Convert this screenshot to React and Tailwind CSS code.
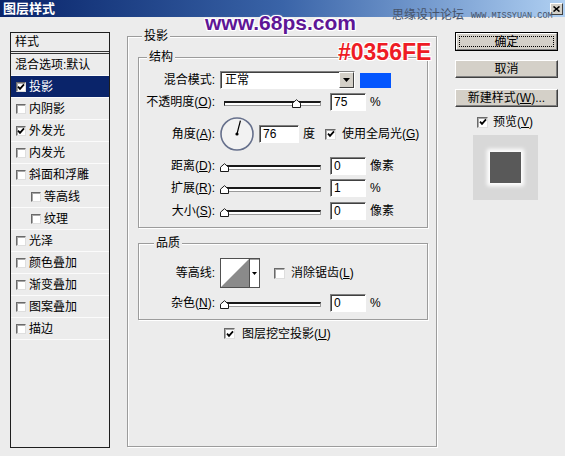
import React from "react";

const Check = ({ checked, big = false, className = "" }) => (
  <span
    className={`inline-flex items-center justify-center shrink-0 bg-white border border-t-[#6a6a6a] border-l-[#6a6a6a] border-r-[#dedede] border-b-[#dedede] shadow-[inset_1px_1px_0_#a8a8a8] ${
      big ? "w-[11px] h-[11px]" : "w-[10px] h-[10px]"
    } ${className}`}
  >
    {checked && (
      <svg width="8" height="8" viewBox="0 0 8 8">
        <path d="M1 3.6 L3 5.8 L7 1.4" fill="none" stroke="#000" strokeWidth="1.8" />
      </svg>
    )}
  </span>
);

const Field = ({ value, w }) => (
  <div
    className={`h-[18px] shrink-0 bg-white border border-t-[#808080] border-l-[#808080] border-r-white border-b-white shadow-[inset_1px_1px_0_#404040] pl-[3px] flex items-center ${w}`}
  >
    {value}
  </div>
);

const Slider = ({ value }) => (
  <div className="relative w-[106px] h-[18px] shrink-0">
    <div className="absolute left-[4px] top-[8px] w-[97px] h-[5px] bg-white border border-t-2 border-[#1a1a1a] border-r-[#9a9a9a] border-b-[#9a9a9a]" />
    <svg
      className="absolute top-[6px]"
      style={{ left: 4 + value * 0.97 - 4.5 }}
      width="9"
      height="9"
      viewBox="0 0 9 9"
    >
      <path d="M0.5 8.5V4.2L4.5 0.7L8.5 4.2V8.5Z" fill="#fff" stroke="#1a1a1a" />
    </svg>
  </div>
);

const Label = ({ children }) => (
  <div className="w-[76px] shrink-0 mr-[5px] text-right whitespace-nowrap">{children}</div>
);

const U = ({ children }) => <span className="underline underline-offset-[1px]">{children}</span>;

const Legend = ({ children, className = "" }) => (
  <span className={`absolute -top-[8px] px-[2px] bg-[#ececec] leading-[14px] ${className}`}>{children}</span>
);

const group = "relative border border-[#9c9c9c] shadow-[inset_1px_1px_0_#ffffff,1px_1px_0_#ffffff]";

const ListRow = ({ label, checkbox = true, checked = false, indent = false, selected = false }) => (
  <div
    className={`h-[22px] shrink-0 flex items-center border-b border-[#fbfbfb] ${
      indent ? "pl-[20px]" : checkbox ? "pl-[5px]" : "pl-[4px]"
    } ${selected ? "bg-[#0a246a] text-white" : ""}`}
  >
    {checkbox && <Check checked={checked} className="mr-[3px]" />}
    <span className="whitespace-nowrap">{label}</span>
  </div>
);

const Btn = ({ children }) => (
  <div className="h-[18px] bg-[#d4d0c8] border border-t-white border-l-white border-r-[#404040] border-b-[#404040] shadow-[inset_-1px_-1px_0_#808080] flex items-center justify-center whitespace-nowrap">
    {children}
  </div>
);

export default function App() {
  return (
    <div className="relative w-[565px] h-[456px] bg-[#ececec] overflow-hidden text-[12px] leading-[14px] text-black font-['Liberation_Sans','Noto_Sans_CJK_SC',sans-serif]">
      {/* Title bar */}
      <div className="h-[17px] flex items-center bg-linear-to-r from-[#0a246a] via-[#3a64a8] to-[#b0d0f2] pl-[3px] pr-[2px]">
        <span className="font-bold text-white text-[13px] leading-[15px]">图层样式</span>
        <div className="ml-auto w-[13px] h-[12px] bg-[#d4d0c8] border border-t-white border-l-white border-r-[#404040] border-b-[#404040] flex items-center justify-center">
          <svg width="7" height="6" viewBox="0 0 7 6">
            <path d="M0.5 0.5 L6.5 5.5 M6.5 0.5 L0.5 5.5" stroke="#000" strokeWidth="1.6" />
          </svg>
        </div>
      </div>

      <div className="flex">
        {/* Left list */}
        <div className="ml-[10px] mt-[15px] w-[100px] h-[416px] border border-[#1e1e1e] flex flex-col">
          <div className="h-[21px] shrink-0 flex items-center pl-[4px] border-b-[3px] border-double border-[#333]">样式</div>
          <ListRow label="混合选项:默认" checkbox={false} />
          <ListRow label="投影" checked selected />
          <ListRow label="内阴影" />
          <ListRow label="外发光" checked />
          <ListRow label="内发光" />
          <ListRow label="斜面和浮雕" />
          <ListRow label="等高线" indent />
          <ListRow label="纹理" indent />
          <ListRow label="光泽" />
          <ListRow label="颜色叠加" />
          <ListRow label="渐变叠加" />
          <ListRow label="图案叠加" />
          <ListRow label="描边" />
        </div>

        {/* Middle: 投影 */}
        <div className={`${group} ml-[17px] mt-[19px] w-[310px] h-[411px] pl-[10px] flex flex-col`}>
          <Legend className="left-[14px]">投影</Legend>

          {/* 结构 */}
          <div className={`${group} mt-[20px] w-[290px] h-[171px] flex flex-col`}>
            <Legend className="left-[8px]">结构</Legend>

            <div className="mt-[13px] h-[18px] flex items-center">
              <Label>混合模式:</Label>
              <div className="w-[135px] h-[18px] bg-white border border-t-[#808080] border-l-[#808080] border-r-white border-b-white shadow-[inset_1px_1px_0_#404040] flex items-center">
                <span className="pl-[4px] flex-1">正常</span>
                <div className="w-[15px] h-[16px] bg-[#d4d0c8] border border-t-white border-l-white border-r-[#404040] border-b-[#404040] flex items-center justify-center">
                  <svg width="7" height="4" viewBox="0 0 7 4">
                    <path d="M0 0 H7 L3.5 4 Z" fill="#000" />
                  </svg>
                </div>
              </div>
              <div className="ml-[5px] w-[31px] h-[15px] bg-[#0356fe]" />
            </div>

            <div className="mt-[4px] h-[18px] flex items-center">
              <Label>
                不透明度(<U>O</U>):
              </Label>
              <Slider value={75} />
              <Field value="75" w="w-[36px] ml-[4px]" />
              <span className="ml-[4px]">%</span>
            </div>

            <div className="mt-[6px] h-[34px] flex items-center">
              <Label>
                角度(<U>A</U>):
              </Label>
              <svg width="34" height="34" viewBox="0 0 34 34" className="shrink-0">
                <circle cx="17" cy="17" r="16" fill="#f2f2f2" stroke="#66708c" strokeWidth="1.6" />
                <line x1="17" y1="17" x2="20.4" y2="3.6" stroke="#000" strokeWidth="1.2" />
                <circle cx="17" cy="17" r="1.6" fill="#000" />
              </svg>
              <Field value="76" w="w-[40px] ml-[5px]" />
              <span className="ml-[4px]">度</span>
              <Check checked big className="ml-[10px]" />
              <span className="ml-[6px] whitespace-nowrap">
                使用全局光(<U>G</U>)
              </span>
            </div>

            <div className="mt-[6px] h-[18px] flex items-center">
              <Label>
                距离(<U>D</U>):
              </Label>
              <Slider value={0} />
              <Field value="0" w="w-[36px] ml-[4px]" />
              <span className="ml-[4px]">像素</span>
            </div>

            <div className="mt-[4px] h-[18px] flex items-center">
              <Label>
                扩展(<U>R</U>):
              </Label>
              <Slider value={1} />
              <Field value="1" w="w-[36px] ml-[4px]" />
              <span className="ml-[4px]">%</span>
            </div>

            <div className="mt-[5px] h-[18px] flex items-center">
              <Label>
                大小(<U>S</U>):
              </Label>
              <Slider value={0} />
              <Field value="0" w="w-[36px] ml-[4px]" />
              <span className="ml-[4px]">像素</span>
            </div>
          </div>

          {/* 品质 */}
          <div className={`${group} mt-[15px] w-[290px] h-[77px] flex flex-col`}>
            <Legend className="left-[15px]">品质</Legend>

            <div className="mt-[14px] h-[30px] flex items-center">
              <Label>等高线:</Label>
              <div className="w-[40px] h-[30px] flex bg-white border border-t-[#505050] border-l-[#505050] border-r-[#505050] border-b-[#505050] shadow-[inset_1px_1px_0_#a0a0a0]">
                <svg width="28" height="28" viewBox="0 0 28 28" className="shrink-0">
                  <rect x="0" y="0" width="28" height="28" fill="#fff" />
                  <path d="M0 28 L28 0 L28 28 Z" fill="#8a8a8a" />
                </svg>
                <div className="flex-1 border-l border-[#505050] flex items-center justify-center">
                  <svg width="5" height="3" viewBox="0 0 5 3">
                    <path d="M0 0 H5 L2.5 3 Z" fill="#000" />
                  </svg>
                </div>
              </div>
              <Check big className="ml-[14px]" />
              <span className="ml-[6px] whitespace-nowrap">
                消除锯齿(<U>L</U>)
              </span>
            </div>

            <div className="mt-[6px] h-[18px] flex items-center">
              <Label>
                杂色(<U>N</U>):
              </Label>
              <Slider value={0} />
              <Field value="0" w="w-[36px] ml-[4px]" />
              <span className="ml-[4px]">%</span>
            </div>
          </div>

          <div className="mt-[8px] h-[11px] ml-[86px] flex items-center">
            <Check checked big />
            <span className="ml-[7px] whitespace-nowrap">
              图层挖空投影(<U>U</U>)
            </span>
          </div>
        </div>

        {/* Right column */}
        <div className="ml-[18px] mt-[15px] w-[103px] flex flex-col">
          <div className="h-[19px] border border-black bg-[#d4d0c8]">
            <div className="h-full border border-t-white border-l-white border-r-[#808080] border-b-[#808080] p-[2px]">
              <div className="w-full h-full border border-dotted border-black flex items-center justify-center">确定</div>
            </div>
          </div>
          <div className="mt-[9px]">
            <Btn>取消</Btn>
          </div>
          <div className="mt-[11px]">
            <Btn>
              新建样式(<U>W</U>)...
            </Btn>
          </div>
          <div className="mt-[9px] h-[12px] ml-[22px] flex items-center">
            <Check checked big />
            <span className="ml-[5px] whitespace-nowrap">
              预览(<U>V</U>)
            </span>
          </div>
          <div className="mt-[7px] ml-[18px] w-[65px] h-[65px] bg-[#d8d8d8] flex items-center justify-center">
            <div className="w-[31px] h-[31px] bg-[#595959] shadow-[0_0_4px_3px_#ffffff]" />
          </div>
        </div>
      </div>

      {/* Watermarks */}
      <div className="absolute left-[205px] top-[12px] font-bold text-[21px] leading-[21px] text-[#5e1696] font-['Liberation_Sans',Arial,sans-serif] [text-shadow:1px_1px_0_#fff,-1px_-1px_0_#fff,1px_-1px_0_#fff,-1px_1px_0_#fff,0_0_3px_#fff]">
        www.68ps.com
      </div>
      <div className="absolute left-[392px] top-[8px] flex items-end">
        <span className="text-[12px] leading-[14px] text-[#46536a]">思缘设计论坛</span>
        <span className="ml-[7px] mb-[1px] text-[8.5px] leading-[10px] text-[#46536a] font-['Liberation_Mono',monospace]">WWW.MISSYUAN.COM</span>
      </div>
      <div className="absolute left-[338px] top-[41px] font-bold text-[23px] leading-[23px] text-[#ee1c25] font-['Liberation_Sans',Arial,sans-serif] [text-shadow:1px_1px_0_#fff,-1px_-1px_0_#fff,1px_-1px_0_#fff,-1px_1px_0_#fff]">
        #0356FE
      </div>
    </div>
  );
}
